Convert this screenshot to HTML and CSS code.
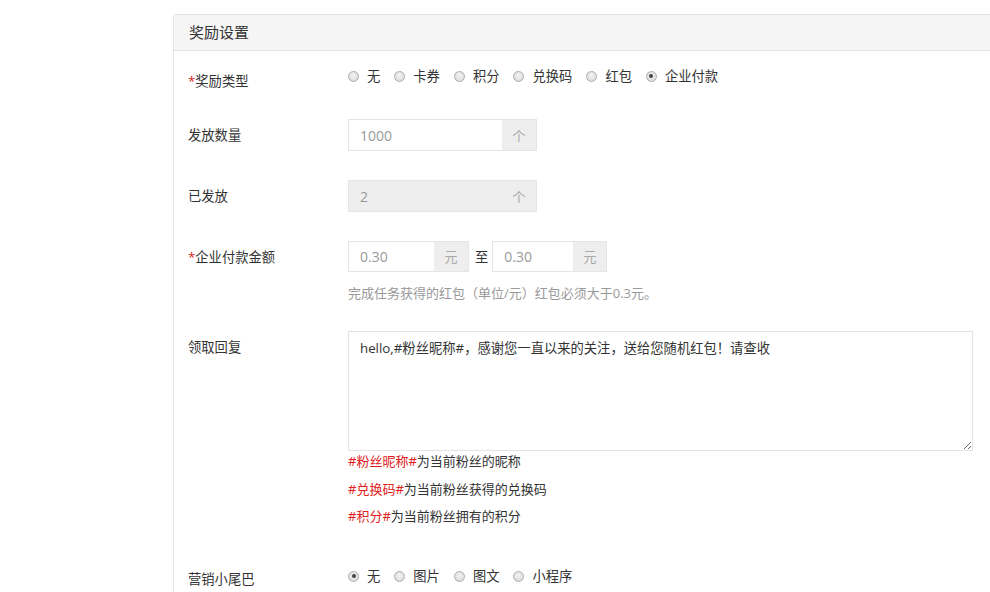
FILE: index.html
```html
<!DOCTYPE html>
<html lang="zh-CN">
<head>
<meta charset="utf-8">
<title>奖励设置</title>
<link rel="stylesheet" href="styles.css">
</head>
<body>
<div class="panel">
  <div class="panel-heading">奖励设置</div>
  <div class="panel-body">
    <div class="row r1">
      <div class="lbl lbl-r1"><span class="req">*</span>奖励类型</div>
      <div class="radios">
        <label class="radio"><span class="dot"></span>无</label>
        <label class="radio"><span class="dot"></span>卡券</label>
        <label class="radio"><span class="dot"></span>积分</label>
        <label class="radio"><span class="dot"></span>兑换码</label>
        <label class="radio"><span class="dot"></span>红包</label>
        <label class="radio"><span class="dot on"></span>企业付款</label>
      </div>
    </div>

    <div class="row r2">
      <div class="lbl lbl-input">发放数量</div>
      <div class="ctrl">
        <div class="igroup">
          <input class="inp inp-count" type="text" value="1000">
          <span class="addon">个</span>
        </div>
      </div>
    </div>

    <div class="row r3">
      <div class="lbl lbl-input">已发放</div>
      <div class="ctrl">
        <div class="igroup">
          <input class="inp inp-count disabled" type="text" value="2" disabled>
          <span class="addon">个</span>
        </div>
      </div>
    </div>

    <div class="row r4">
      <div class="lbl lbl-input"><span class="req">*</span>企业付款金额</div>
      <div class="ctrl">
        <div class="range">
          <div class="igroup short">
            <input class="inp inp-min" type="text" value="0.30">
            <span class="addon">元</span>
          </div>
          <span class="to">至</span>
          <div class="igroup short">
            <input class="inp inp-max" type="text" value="0.30">
            <span class="addon addon-narrow">元</span>
          </div>
        </div>
        <div class="help">完成任务获得的红包（单位/元）红包必须大于0.3元。</div>
      </div>
    </div>

    <div class="row r5">
      <div class="lbl lbl-input">领取回复</div>
      <div class="ctrl">
        <textarea class="reply">hello,#粉丝昵称#，感谢您一直以来的关注，送给您随机红包！请查收</textarea>
        <div class="hints">
          <div class="hint"><span class="tag">#粉丝昵称#</span>为当前粉丝的昵称</div>
          <div class="hint"><span class="tag">#兑换码#</span>为当前粉丝获得的兑换码</div>
          <div class="hint"><span class="tag">#积分#</span>为当前粉丝拥有的积分</div>
        </div>
      </div>
    </div>

    <div class="row r6">
      <div class="lbl lbl-r6">营销小尾巴</div>
      <div class="radios">
        <label class="radio"><span class="dot on"></span>无</label>
        <label class="radio"><span class="dot"></span>图片</label>
        <label class="radio"><span class="dot"></span>图文</label>
        <label class="radio"><span class="dot"></span>小程序</label>
      </div>
    </div>
  </div>
</div>
</body>
</html>
```
FILE: styles.css
```css
html, body {
  margin: 0;
  padding: 0;
  background: #fff;
  overflow: hidden;
}
body {
  font-family: "Open Sans", "Noto Sans CJK SC", sans-serif;
  font-size: 13px;
  color: #333;
  width: 990px;
  height: 592px;
}
.panel {
  margin: 14px 0 0 173px;
  width: 840px;
  border: 1px solid #e3e3e3;
  border-radius: 3px 0 0 0;
  min-height: 600px;
}
.panel-heading {
  height: 35px;
  line-height: 35px;
  padding-left: 15px;
  background: #f5f5f5;
  border-bottom: 1px solid #e3e3e3;
  font-size: 15px;
  color: #333;
  border-radius: 3px 0 0 0;
}
.panel-body {
  padding: 9px 0 0 14px;
}
.row {
  display: flex;
  align-items: flex-start;
}
.lbl {
  width: 160px;
  flex: none;
  line-height: 20px;
  font-size: 13.3px;
  color: #333;
}
.req { color: #e02020; }
.lbl-r1 { padding-top: 11px; }
.lbl-input { padding-top: 6px; }
.lbl-r6 { padding-top: 9px; }

.r1 { height: 32px; margin-bottom: 27px; }
.r2 { margin-bottom: 29px; }
.r3 { margin-bottom: 29px; }
.r4 { margin-bottom: 28px; }
.r5 { margin-bottom: 34px; }
.r6 { height: 32px; }

.radios {
  display: flex;
  align-items: center;
  height: 32px;
}
.radio {
  display: flex;
  align-items: center;
  margin-right: 14px;
  font-size: 13.3px;
  color: #333;
  line-height: 20px;
}
.dot {
  position: relative;
  width: 11px;
  height: 11px;
  box-sizing: border-box;
  border-radius: 50%;
  border: 1px solid #adadad;
  background: radial-gradient(circle at 50% 40%, #f4f4f4 0%, #d4d4d4 100%);
  margin-right: 8px;
}
.dot.on::after {
  content: "";
  position: absolute;
  left: 2.5px;
  top: 2.5px;
  width: 4px;
  height: 4px;
  border-radius: 50%;
  background: #444;
}

.ctrl {
  display: flex;
  flex-direction: column;
}
.igroup {
  display: flex;
  height: 32px;
}
.inp {
  box-sizing: border-box;
  height: 100%;
  margin: 0;
  border: 1px solid #e5e5e5;
  border-right: none;
  padding: 0 0 0 11px;
  font-family: "Open Sans", "Noto Sans CJK SC", sans-serif;
  font-size: 14px;
  color: #999;
  background: #fff;
  outline: none;
}
.inp.disabled {
  background: #eeeeee;
  -webkit-text-fill-color: #999;
  opacity: 1;
}
.inp-count { width: 154px; }
.inp-min { width: 86px; }
.inp-max { width: 81px; }
.addon {
  box-sizing: border-box;
  width: 35px;
  height: 100%;
  display: flex;
  align-items: center;
  justify-content: center;
  background: #eeeeee;
  border: 1px solid #e5e5e5;
  border-left: none;
  color: #aaa;
  font-size: 13.3px;
}
.addon-narrow { width: 34px; }
.range {
  display: flex;
  align-items: center;
}
.igroup.short { height: 31px; }
.to {
  margin: 0 4px 0 6px;
  font-size: 13.3px;
  color: #333;
}
.help {
  margin-top: 11px;
  line-height: 20px;
  font-size: 13px;
  color: #999;
}
.reply {
  box-sizing: border-box;
  display: block;
  width: 625px;
  height: 120px;
  margin: 0;
  padding: 6px 11px;
  border: 1px solid #e3e3e3;
  font-family: "Open Sans", "Noto Sans CJK SC", sans-serif;
  font-size: 13.3px;
  line-height: 20px;
  color: #333;
  outline: none;
}
.hints {
  display: flex;
  flex-direction: column;
  gap: 7.5px;
}
.hint {
  line-height: 20px;
  font-size: 13px;
  color: #333;
}
.tag { color: #e02020; }
```
